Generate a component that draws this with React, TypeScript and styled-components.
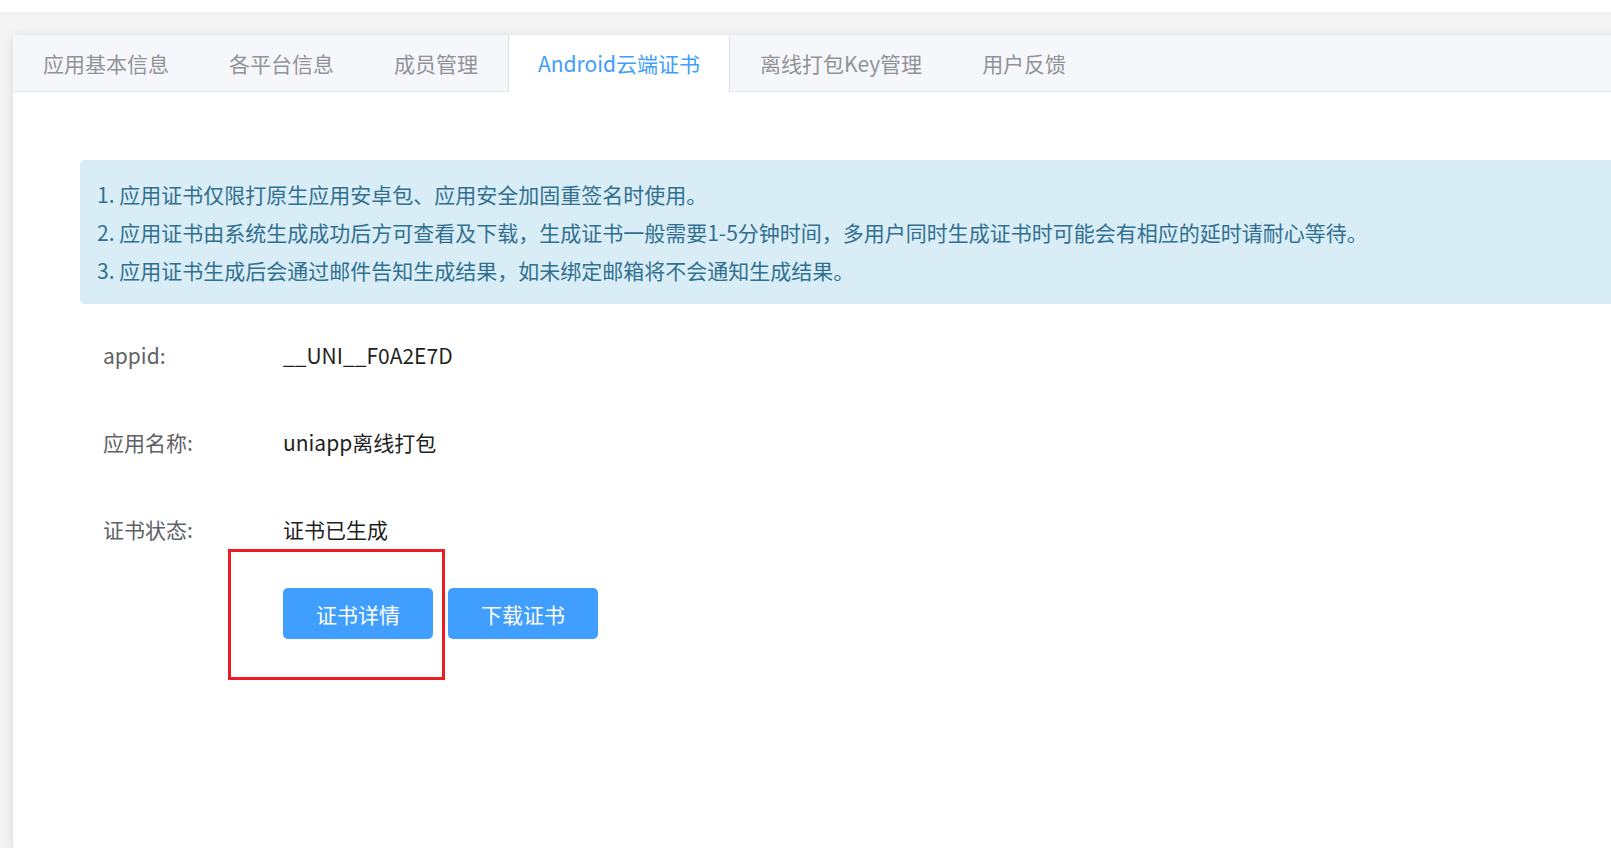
import React, { useState } from "react";
import styled, { createGlobalStyle } from "styled-components";

const GlobalStyle = createGlobalStyle`
  html, body {
    margin: 0;
    padding: 0;
    background: #ffffff;
    overflow: hidden;
  }
  body {
    font-family: "Noto Sans CJK SC", "Noto Sans", sans-serif;
  }
`;

const Page = styled.div`
  padding-top: 12px;
  height: 848px;
  box-sizing: border-box;
`;

const Main = styled.div`
  background: #f4f4f4;
  height: 100%;
  padding: 23px 0 0 13px;
  box-sizing: border-box;
  display: flex;
  box-shadow: inset 0 6px 6px -6px rgba(0, 0, 0, 0.06);
`;

const Card = styled.div`
  flex: 1;
  margin-right: -20px;
  background: #ffffff;
  box-shadow: 0 2px 10px rgba(0, 0, 0, 0.12);
  display: flex;
  flex-direction: column;
`;

const TabBar = styled.div`
  display: flex;
  height: 57px;
  background: #f5f7fa;
  border-bottom: 1px solid #e4e7ed;
  box-sizing: border-box;
`;

const Tab = styled.div<{ $active?: boolean }>`
  padding: 0 29px;
  border-left: 1px solid ${(p) => (p.$active ? "#dcdfe6" : "transparent")};
  border-right: 1px solid ${(p) => (p.$active ? "#dcdfe6" : "transparent")};
  background: ${(p) => (p.$active ? "#ffffff" : "transparent")};
  color: ${(p) => (p.$active ? "#409eff" : "#909399")};
  font-size: 21px;
  line-height: 57px;
  height: 57px;
  cursor: pointer;
  white-space: nowrap;
`;

const Content = styled.div`
  padding: 68px 0 0 67px;
`;

const Notice = styled.div`
  background: #d9edf7;
  color: #31708f;
  border-radius: 5px 0 0 5px;
  padding: 15px 17px;
  font-size: 21px;
`;

const NoticeLine = styled.p`
  margin: 0;
  line-height: 38px;
  white-space: nowrap;
`;

const InfoList = styled.div`
  margin-top: 7px;
  padding-left: 23px;
`;

const InfoRow = styled.div`
  display: flex;
  align-items: center;
  height: 87px;
  font-size: 21px;
`;

const Label = styled.span`
  width: 180px;
  color: #606266;
`;

const Value = styled.span`
  color: #1f1f1f;
`;

const Actions = styled.div`
  position: relative;
  display: flex;
  gap: 15px;
  margin: 16px 0 0 203px;
`;

const Button = styled.button`
  width: 150px;
  height: 51px;
  border: none;
  border-radius: 5px;
  background: #409eff;
  color: #ffffff;
  font-family: inherit;
  font-size: 21px;
  cursor: pointer;
  &:hover {
    background: #66b1ff;
  }
`;

const Highlight = styled.div`
  position: absolute;
  left: -55px;
  top: -39px;
  width: 217px;
  height: 131px;
  border: 3px solid #ec1c24;
  box-sizing: border-box;
  pointer-events: none;
`;

const tabs = [
  "应用基本信息",
  "各平台信息",
  "成员管理",
  "Android云端证书",
  "离线打包Key管理",
  "用户反馈",
];

const notices = [
  "1. 应用证书仅限打原生应用安卓包、应用安全加固重签名时使用。",
  "2. 应用证书由系统生成成功后方可查看及下载，生成证书一般需要1-5分钟时间，多用户同时生成证书时可能会有相应的延时请耐心等待。",
  "3. 应用证书生成后会通过邮件告知生成结果，如未绑定邮箱将不会通知生成结果。",
];

const info = [
  { label: "appid:", value: "__UNI__F0A2E7D" },
  { label: "应用名称:", value: "uniapp离线打包" },
  { label: "证书状态:", value: "证书已生成" },
];

export default function App() {
  const [active, setActive] = useState(3);

  return (
    <>
      <GlobalStyle />
      <Page>
        <Main>
          <Card>
            <TabBar>
              {tabs.map((t, i) => (
                <Tab key={t} $active={i === active} onClick={() => setActive(i)}>
                  {t}
                </Tab>
              ))}
            </TabBar>
            <Content>
              <Notice>
                {notices.map((n) => (
                  <NoticeLine key={n}>{n}</NoticeLine>
                ))}
              </Notice>
              <InfoList>
                {info.map((row) => (
                  <InfoRow key={row.label}>
                    <Label>{row.label}</Label>
                    <Value>{row.value}</Value>
                  </InfoRow>
                ))}
              </InfoList>
              <Actions>
                <Highlight />
                <Button>证书详情</Button>
                <Button>下载证书</Button>
              </Actions>
            </Content>
          </Card>
        </Main>
      </Page>
    </>
  );
}
